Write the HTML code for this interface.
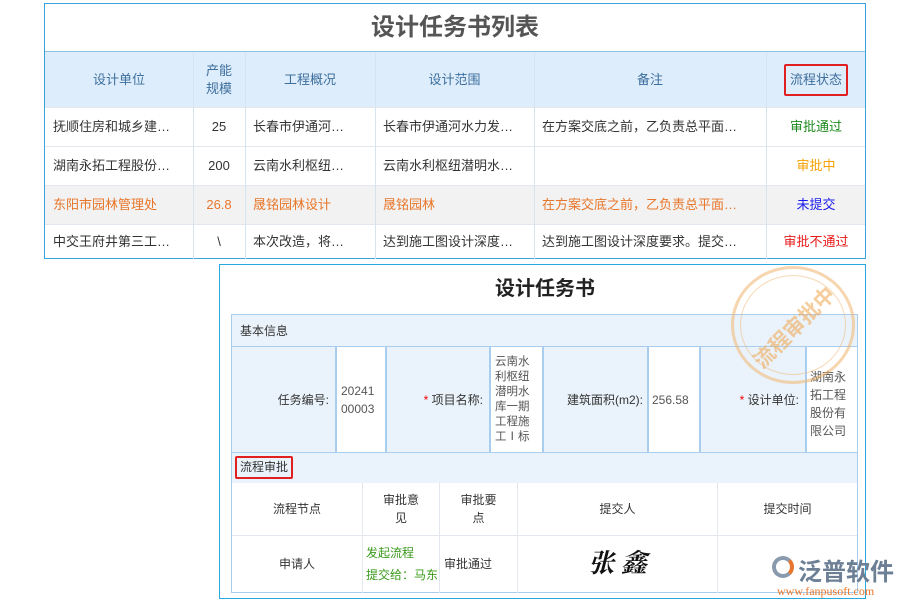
<!DOCTYPE html>
<html><head><meta charset="utf-8"><style>
*{margin:0;padding:0;box-sizing:border-box}
body{width:900px;height:600px;background:#fff;position:relative;overflow:hidden;font-family:"Liberation Sans","Noto Sans CJK SC",sans-serif;font-size:13px;color:#333}
.a{position:absolute}
.c{position:absolute;display:flex;align-items:center;justify-content:center;text-align:center;line-height:18px}
.l{justify-content:flex-start;padding-left:8px}
.vl{position:absolute;width:1px;background:#d6e4ef}
.hl{position:absolute;height:1px;background:#e3e8ee}
.bl{position:absolute;background:#a9cdef}
</style></head><body>
<!-- top list -->
<div class="a" style="left:44px;top:3px;width:822px;height:256px;border:1px solid #3aa3dc"></div>
<div class="c" style="left:45px;top:4px;width:820px;height:47px;font-size:24px;font-weight:bold;color:#555">设计任务书列表</div>
<div class="a" style="left:45px;top:51px;width:820px;height:1px;background:#8fc3e6"></div>
<div class="a" style="left:45px;top:52px;width:820px;height:55px;background:#deedfb"></div>
<div class="a" style="left:45px;top:185px;width:820px;height:39px;background:#f2f2f2"></div>
<div class="hl" style="left:45px;top:107px;width:820px"></div>
<div class="hl" style="left:45px;top:146px;width:820px"></div>
<div class="hl" style="left:45px;top:185px;width:820px"></div>
<div class="hl" style="left:45px;top:224px;width:820px"></div>
<div class="vl" style="left:193px;top:52px;height:207px"></div>
<div class="vl" style="left:245px;top:52px;height:207px"></div>
<div class="vl" style="left:375px;top:52px;height:207px"></div>
<div class="vl" style="left:534px;top:52px;height:207px"></div>
<div class="vl" style="left:766px;top:52px;height:207px"></div>
<div style="color:#3d6f9e">
<div class="c" style="left:45px;top:52px;width:148px;height:55px">设计单位</div>
<div class="c" style="left:193px;top:52px;width:52px;height:55px">产能<br>规模</div>
<div class="c" style="left:245px;top:52px;width:130px;height:55px">工程概况</div>
<div class="c" style="left:375px;top:52px;width:159px;height:55px">设计范围</div>
<div class="c" style="left:534px;top:52px;width:232px;height:55px">备注</div>
<div class="c" style="left:766px;top:52px;width:100px;height:55px"><span style="border:2px solid #e02020;padding:5px 4px;border-radius:2px">流程状态</span></div>
</div>
<div class="c l" style="left:45px;top:107px;width:148px;height:39px">抚顺住房和城乡建…</div>
<div class="c" style="left:193px;top:107px;width:52px;height:39px">25</div>
<div class="c l" style="left:245px;top:107px;width:130px;height:39px">长春市伊通河…</div>
<div class="c l" style="left:375px;top:107px;width:159px;height:39px">长春市伊通河水力发…</div>
<div class="c l" style="left:534px;top:107px;width:232px;height:39px">在方案交底之前，乙负责总平面…</div>
<div class="c" style="left:766px;top:107px;width:100px;height:39px;color:#1e8a1e">审批通过</div>
<div class="c l" style="left:45px;top:146px;width:148px;height:39px">湖南永拓工程股份…</div>
<div class="c" style="left:193px;top:146px;width:52px;height:39px">200</div>
<div class="c l" style="left:245px;top:146px;width:130px;height:39px">云南水利枢纽…</div>
<div class="c l" style="left:375px;top:146px;width:159px;height:39px">云南水利枢纽潜明水…</div>
<div class="c" style="left:766px;top:146px;width:100px;height:39px;color:#f5a000">审批中</div>
<div style="color:#e8762a">
<div class="c l" style="left:45px;top:185px;width:148px;height:39px">东阳市园林管理处</div>
<div class="c" style="left:193px;top:185px;width:52px;height:39px">26.8</div>
<div class="c l" style="left:245px;top:185px;width:130px;height:39px">晟铭园林设计</div>
<div class="c l" style="left:375px;top:185px;width:159px;height:39px">晟铭园林</div>
<div class="c l" style="left:534px;top:185px;width:232px;height:39px">在方案交底之前，乙负责总平面…</div>
</div>
<div class="c" style="left:766px;top:185px;width:100px;height:39px;color:#1a1aee">未提交</div>
<div class="c l" style="left:45px;top:224px;width:148px;height:35px">中交王府井第三工…</div>
<div class="c" style="left:193px;top:224px;width:52px;height:35px">\</div>
<div class="c l" style="left:245px;top:224px;width:130px;height:35px">本次改造，将…</div>
<div class="c l" style="left:375px;top:224px;width:159px;height:35px">达到施工图设计深度…</div>
<div class="c l" style="left:534px;top:224px;width:232px;height:35px">达到施工图设计深度要求。提交…</div>
<div class="c" style="left:766px;top:224px;width:100px;height:35px;color:#e81a1a">审批不通过</div>

<!-- bottom form -->
<div class="a" style="left:219px;top:264px;width:647px;height:335px;border:1px solid #29a8e0"></div>
<div class="c" style="left:220px;top:272px;width:650px;height:34px;font-size:20px;font-weight:bold;color:#222">设计任务书</div>
<div class="a" style="left:231px;top:314px;width:627px;height:279px;border:1px solid #a9cdef"></div>
<div class="a" style="left:232px;top:315px;width:625px;height:31px;background:#eaf3fb"></div>
<div class="a" style="left:232px;top:346px;width:625px;height:107px;background:#eaf3fb"></div>
<div class="a" style="left:336px;top:346px;width:50px;height:107px;background:#fff"></div>
<div class="a" style="left:490px;top:346px;width:53px;height:107px;background:#fff"></div>
<div class="a" style="left:648px;top:346px;width:52px;height:107px;background:#fff"></div>
<div class="a" style="left:806px;top:346px;width:51px;height:107px;background:#fff"></div>
<div class="a" style="left:232px;top:453px;width:625px;height:30px;background:#eaf3fb"></div>
<div class="bl" style="left:232px;top:346px;width:625px;height:1px"></div>
<div class="bl" style="left:232px;top:452px;width:625px;height:1px"></div>
<div class="bl" style="left:335px;top:346px;width:2px;height:107px"></div>
<div class="bl" style="left:385px;top:346px;width:2px;height:107px"></div>
<div class="bl" style="left:489px;top:346px;width:2px;height:107px"></div>
<div class="bl" style="left:542px;top:346px;width:2px;height:107px"></div>
<div class="bl" style="left:647px;top:346px;width:2px;height:107px"></div>
<div class="bl" style="left:699px;top:346px;width:2px;height:107px"></div>
<div class="bl" style="left:805px;top:346px;width:2px;height:107px"></div>
<div class="hl" style="left:232px;top:535px;width:625px"></div>
<div class="vl" style="left:362px;top:483px;height:110px;background:#e3e8ee"></div>
<div class="vl" style="left:439px;top:483px;height:110px;background:#e3e8ee"></div>
<div class="vl" style="left:517px;top:483px;height:110px;background:#e3e8ee"></div>
<div class="vl" style="left:717px;top:483px;height:110px;background:#e3e8ee"></div>
<div style="font-size:12px;color:#333">
<div class="c l" style="left:232px;top:315px;width:200px;height:31px">基本信息</div>
<div class="c" style="left:232px;top:346px;width:103px;height:107px;justify-content:flex-end;padding-right:6px">任务编号:</div>
<div class="c" style="left:337px;top:346px;width:48px;height:107px;justify-content:flex-start;padding-left:4px;text-align:left;color:#555">20241<br>00003</div>
<div class="c" style="left:387px;top:346px;width:102px;height:107px;justify-content:flex-end;padding-right:6px"><span style="color:#e00">*</span>&nbsp;项目名称:</div>
<div class="c" style="left:491px;top:346px;width:51px;height:107px;justify-content:flex-start;padding-left:4px;text-align:left;color:#555;line-height:15px;font-size:11.5px">云南水<br>利枢纽<br>潜明水<br>库一期<br>工程施<br>工Ⅰ标</div>
<div class="c" style="left:544px;top:346px;width:103px;height:107px;justify-content:flex-end;padding-right:4px">建筑面积(m2):</div>
<div class="c" style="left:649px;top:346px;width:50px;height:107px;justify-content:flex-start;padding-left:3px;color:#555">256.58</div>
<div class="c" style="left:701px;top:346px;width:104px;height:107px;justify-content:flex-end;padding-right:6px"><span style="color:#e00">*</span>&nbsp;设计单位:</div>
<div class="c" style="left:807px;top:346px;width:50px;height:107px;justify-content:flex-start;padding-left:3px;text-align:left;color:#555;padding-top:8px">湖南永<br>拓工程<br>股份有<br>限公司</div>
<div class="a" style="left:235px;top:456px;width:58px;height:23px;border:2px solid #e02020;border-radius:2px;line-height:19px;padding-left:3px">流程审批</div>
<div class="c" style="left:232px;top:483px;width:130px;height:52px">流程节点</div>
<div class="c" style="left:363px;top:483px;width:76px;height:52px">审批意<br>见</div>
<div class="c" style="left:440px;top:483px;width:77px;height:52px">审批要<br>点</div>
<div class="c" style="left:518px;top:483px;width:199px;height:52px">提交人</div>
<div class="c" style="left:718px;top:483px;width:139px;height:52px">提交时间</div>
<div class="c" style="left:232px;top:535px;width:130px;height:58px">申请人</div>
<div class="c" style="left:363px;top:535px;width:76px;height:58px;justify-content:flex-start;padding-left:3px;text-align:left;color:#3a9a1a;line-height:22px">发起流程<br>提交给：马东</div>
<div class="c" style="left:440px;top:535px;width:77px;height:58px;justify-content:flex-start;padding-left:4px">审批通过</div>
<div class="c" style="left:518px;top:535px;width:199px;height:58px;font-family:'Liberation Serif','Noto Serif CJK SC',serif;font-size:26px;font-style:italic;font-weight:bold;color:#111">张 鑫</div>
</div>
<!-- stamp -->
<div class="a" style="left:731px;top:266px;width:124px;height:118px;border:3px solid rgba(240,180,110,.55);border-radius:50%"></div>
<div class="a" style="left:740px;top:275px;width:106px;height:100px;border:1px solid rgba(240,180,110,.5);border-radius:50%"></div>
<div class="a" style="left:724px;top:312px;width:140px;text-align:center;font-size:21px;font-weight:bold;color:rgba(238,170,90,.6);transform:rotate(-45deg)">流程审批中</div>
<!-- logo -->
<div class="a" style="left:772px;top:556px;width:22px;height:22px;border-radius:50%;border:4px solid #8a9aae;border-right-color:#e8762a"></div>
<div class="a" style="left:798px;top:552px;font-size:24px;font-weight:bold;color:#6c7f95">泛普软件</div>
<div class="a" style="left:777px;top:584px;font-family:'Liberation Serif',serif;font-size:12px;color:#e8762a">www.fanpusoft.com</div>
</body></html>
